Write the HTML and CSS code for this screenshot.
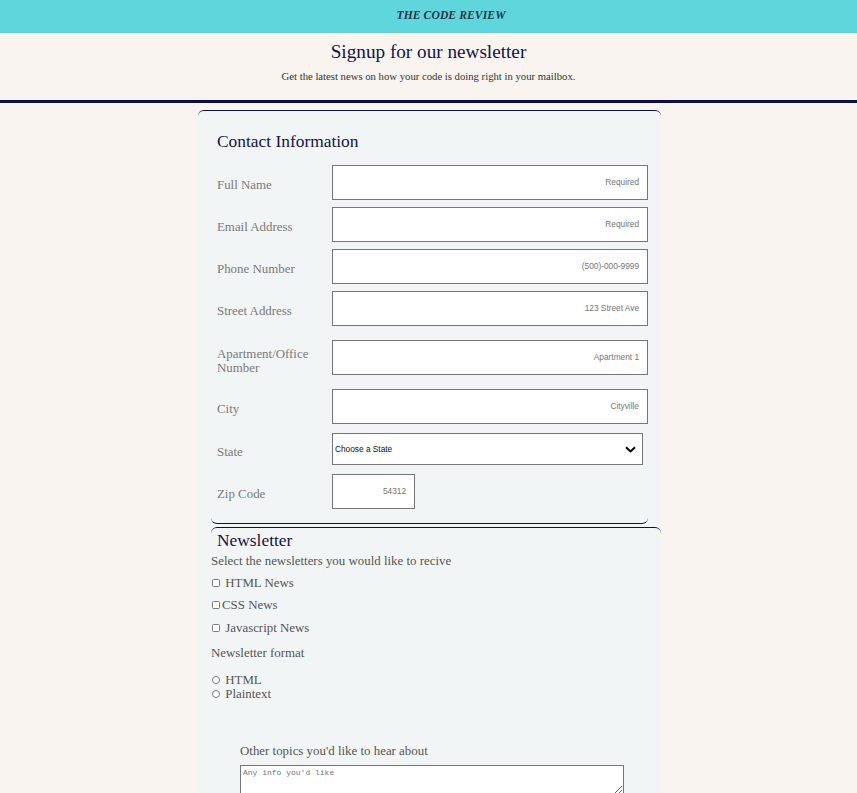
FILE: index.html
```html
<!DOCTYPE html>
<html lang="en">
<head>
<meta charset="utf-8">
<title>The Code Review</title>
<link rel="stylesheet" href="styles.css">
</head>
<body>
<header class="topbar"><span class="brand">THE CODE REVIEW</span></header>
<section class="intro">
  <h1 class="title">Signup for our newsletter</h1>
  <p class="subtitle">Get the latest news on how your code is doing right in your mailbox.</p>
</section>
<div class="rule"></div>
<div class="page">
<main class="card">
  <section class="contact">
    <h2 class="section-title">Contact Information</h2>
    <div class="row"><label class="label">Full Name</label><input class="field" placeholder="Required"></div>
    <div class="row"><label class="label">Email Address</label><input class="field" placeholder="Required"></div>
    <div class="row"><label class="label">Phone Number</label><input class="field" placeholder="(500)-000-9999"></div>
    <div class="row"><label class="label">Street Address</label><input class="field" placeholder="123 Street Ave"></div>
    <div class="row row-tall"><label class="label">Apartment/Office Number</label><input class="field" placeholder="Apartment 1"></div>
    <div class="row"><label class="label">City</label><input class="field" placeholder="Cityville"></div>
    <div class="row row-state"><label class="label">State</label>
      <div class="select-wrap">
        <select class="select"><option>Choose a State</option></select>
        <svg class="chevron" width="11" height="7" viewBox="0 0 11 7"><path d="M1 1.2 L5.5 5.4 L10 1.2" fill="none" stroke="#000" stroke-width="2"/></svg>
      </div>
    </div>
    <div class="row"><label class="label">Zip Code</label><input class="field field-zip" placeholder="54312"></div>
  </section>
  <section class="newsletter">
    <h2 class="section-title nl-title">Newsletter</h2>
    <p class="text">Select the newsletters you would like to recive</p>
    <label class="opt opt-cb opt-first"><input type="checkbox" class="box"> HTML News</label>
    <label class="opt opt-cb"><input type="checkbox" class="box">CSS News</label>
    <label class="opt opt-cb"><input type="checkbox" class="box"> Javascript News</label>
    <p class="text format">Newsletter format</p>
    <div class="radios">
      <label class="opt opt-rd"><input type="radio" name="fmt" class="dot"> HTML</label>
      <label class="opt opt-rd"><input type="radio" name="fmt" class="dot"> Plaintext</label>
    </div>
    <div class="other">
      <p class="text">Other topics you'd like to hear about</p>
      <textarea class="area" placeholder="Any info you'd like"></textarea>
    </div>
  </section>
</main>
</div>
</body>
</html>
```
FILE: styles.css
```css
* { box-sizing: border-box; }
html, body { margin: 0; padding: 0; }
body {
  background: #f9f4f0;
  font-family: "Liberation Serif", "DejaVu Serif", serif;
  color: #555;
}
.topbar {
  height: 33px;
  background: #5ed6dc;
  display: flex;
  align-items: center;
  justify-content: center;
  padding-bottom: 3px;
  padding-left: 45px;
}
.brand {
  font-size: 11.6px;
  font-weight: bold;
  font-style: italic;
  color: #2a3446;
  letter-spacing: 0.1px;
}
.intro {
  text-align: center;
  padding-top: 9px;
  height: 67px;
}
.title {
  margin: 0;
  font-size: 19.2px;
  font-weight: normal;
  color: #12124e;
  line-height: 20px;
}
.subtitle {
  margin: 8px 0 0;
  font-size: 10.7px;
  color: #333;
  line-height: 12px;
}
.rule {
  height: 3px;
  background: #0e0e4e;
}
.page {
  padding-left: 2px;
}
.card {
  width: 463px;
  margin: 7px auto 0;
  background: #f2f5f6;
  border-top: 1px solid #0e0e4e;
  border-radius: 6px 6px 0 0;
  padding: 0 0 0 13px;
  min-height: 700px;
}
.contact {
  width: 437px;
  border-bottom: 1px solid #0e0e4e;
  border-radius: 0 0 6px 6px;
  padding: 0 0 11px;
}
.section-title {
  margin: 0;
  font-size: 17.4px;
  font-weight: normal;
  color: #12124e;
  padding-left: 6px;
}
.contact .section-title {
  padding-top: 20px;
  line-height: 20px;
  height: 50px;
}
.row {
  display: flex;
  align-items: center;
  height: 42px;
}
.row-tall { height: 56px; }
.row-state { height: 43px; }
.label {
  width: 121px;
  flex: none;
  padding-left: 6px;
  padding-top: 6px;
  font-size: 12.9px;
  line-height: 14px;
  color: #7a7a7a;
}
.row-tall .label { width: 121px; padding-right: 10px; padding-top: 8px; }
.field {
  width: 316px;
  height: 35px;
  border: 1px solid #767676;
  border-radius: 0;
  background: #fff;
  text-align: right;
  padding: 0 8px 1px;
  font-family: "Liberation Sans", Arial, sans-serif;
  font-size: 8.3px;
  outline: none;
}
.field::placeholder { color: #757575; }
.field-zip { width: 83px; }
.select-wrap {
  position: relative;
  width: 311px;
  height: 32px;
}
.select {
  appearance: none;
  -webkit-appearance: none;
  width: 100%;
  height: 100%;
  border: 1px solid #767676;
  border-radius: 0;
  background: #fff;
  font-family: "Liberation Sans", Arial, sans-serif;
  font-size: 8.3px;
  color: #111;
  padding: 0 2px;
  outline: none;
}
.chevron {
  position: absolute;
  right: 7px;
  top: 13px;
  pointer-events: none;
}
.newsletter {
  margin-top: 3px;
  width: 450px;
  border-top: 1px solid #0e0e4e;
  border-radius: 6px 6px 0 0;
  padding-top: 2px;
}
.nl-title {
  line-height: 20px;
  height: 22px;
}
.text {
  margin: 0;
  font-size: 12.9px;
  line-height: 14px;
  color: #555;
}
.newsletter > .text:first-of-type { margin-top: 2px; }
.opt {
  display: flex;
  align-items: center;
  font-size: 12.9px;
  line-height: 14px;
  color: #555;
  white-space: pre;
}
.opt-cb { margin-top: 8.5px; height: 14px; }
.opt-cb.opt-first { margin-top: 7.5px; }
.box, .dot {
  appearance: none;
  -webkit-appearance: none;
  width: 8px;
  height: 8px;
  margin: 0 0 0 1px;
  border: 1px solid #7a7a7a;
  background: #fff;
  flex: none;
}
.box { border-radius: 1.5px; margin-right: 2px; }
.dot { border-radius: 50%; margin-right: 2px; }
.format { margin-top: 11px; }
.radios { margin-top: 13px; }
.opt-rd { height: 14px; }
.other {
  padding-left: 29px;
  padding-top: 43px;
}
.area {
  display: block;
  margin-top: 7px;
  width: 384px;
  height: 30px;
  border: 1px solid #767676;
  border-radius: 0;
  background: #fff;
  font-family: "Liberation Mono", monospace;
  font-size: 8px;
  padding: 2px 2px;
  resize: both;
  outline: none;
}
.area::placeholder { color: #757575; }
```
